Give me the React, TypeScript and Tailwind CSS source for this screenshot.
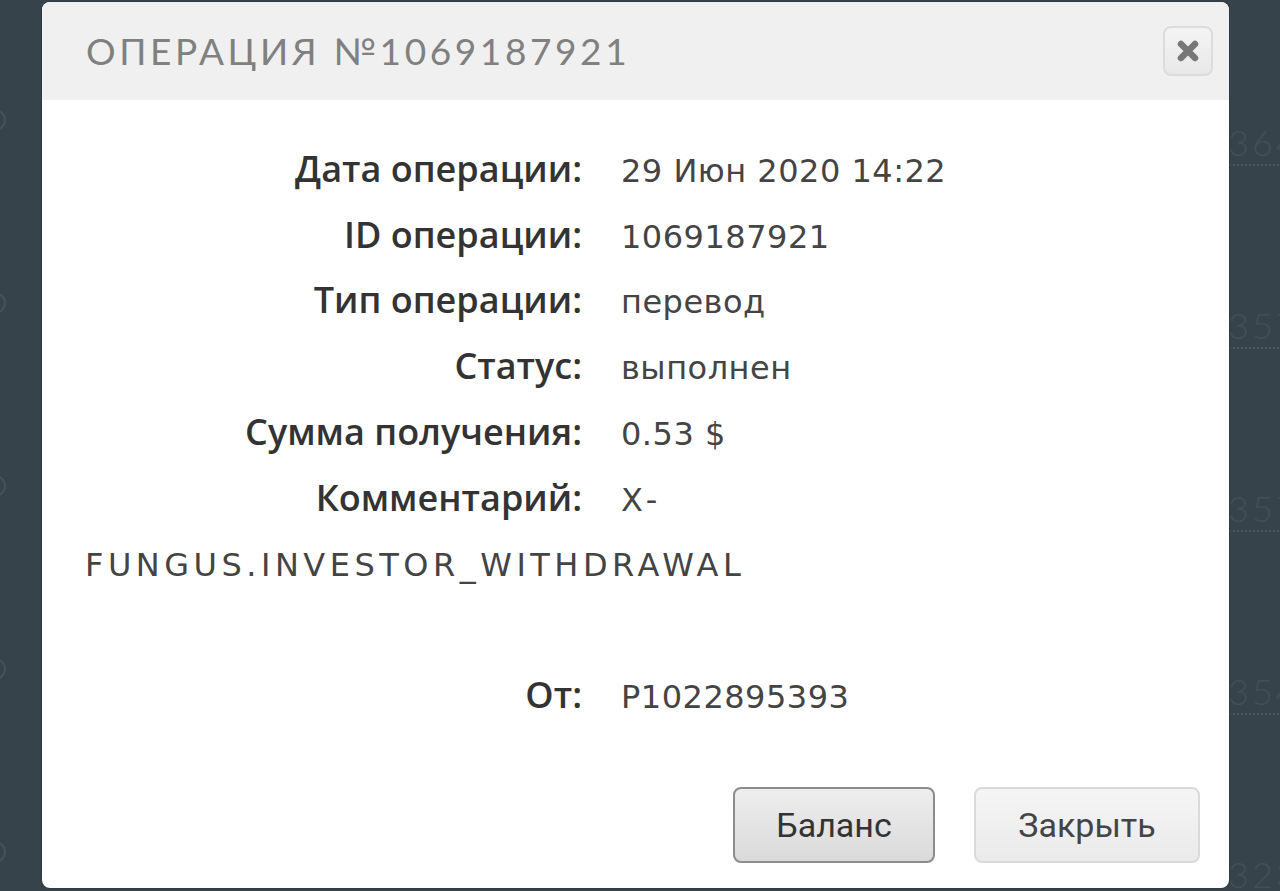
const bgRows = ['364', '357', '357', '354', '323']

const details = [
    { label: 'Дата операции:', value: '29 Июн 2020 14:22' },
    { label: 'ID операции:', value: '1069187921' },
    { label: 'Тип операции:', value: 'перевод' },
    { label: 'Статус:', value: 'выполнен' },
    { label: 'Сумма получения:', value: '0.53 $' },
    { label: 'Комментарий:', value: 'X-FUNGUS.INVESTOR_WITHDRAWAL', wide: true },
]

function Row({ label, value, wide }: { label: string; value: string; wide?: boolean }) {
    return (
        <div className="font-['DejaVu_Sans',sans-serif] text-[32px] leading-[65.7px] text-[#444]">
            <span className="inline-block w-[497px] mr-[39px] align-top text-right font-['Open_Sans',sans-serif] text-[36px] font-semibold leading-[60px] tracking-normal text-[#333]">
                {label}
            </span>
            <span className={wide ? 'tracking-[4.5px]' : 'tracking-[0.5px]'}>{value}</span>
        </div>
    )
}

export default function App() {
    return (
        <div className="relative h-[891px] w-[1280px] overflow-hidden bg-[#37434b] font-['Open_Sans',sans-serif]">
            {/* Page behind the modal */}
            <div className="flex flex-col pt-[28px]">
                {bgRows.map((n, i) => (
                    <div key={i} className="flex h-[183px] items-center justify-between">
                        <div className="-ml-[16px] h-[22px] w-[22px] rounded-full border-2 border-[#46525a]" />
                        <div className="mt-[50px] w-[52px] whitespace-nowrap">
                            <span className="inline-block border-b-2 border-dotted border-[#4c5860] pb-1 font-['Lato',sans-serif] text-[36px] font-light leading-none tracking-[3px] text-[#434f57]">
                                {n}.00
                            </span>
                        </div>
                    </div>
                ))}
            </div>

            {/* Modal */}
            <div className="absolute left-[42px] top-[2px] flex h-[886px] w-[1187px] flex-col overflow-hidden rounded-[8px] bg-white shadow-[0_0_2px_rgba(0,0,0,0.4)]">
                {/* Header */}
                <div className="flex h-[98px] shrink-0 items-center justify-between bg-[#f0f0f0] pl-[44px] pr-[16px]">
                    <h1 className="font-['Lato',sans-serif] text-[37px] font-normal tracking-[3.6px] text-[#808080]">
                        ОПЕРАЦИЯ №1069187921
                    </h1>
                    <button className="flex h-[50px] w-[50px] items-center justify-center rounded-[8px] border-2 border-[#dcdcdc] bg-gradient-to-b from-[#f4f4f4] to-[#e8e8e8]">
                        <svg width="26" height="26" viewBox="0 0 26 26">
                            <path
                                d="M6 6 L20 20 M20 6 L6 20"
                                stroke="#777"
                                strokeWidth="6.5"
                                strokeLinecap="round"
                            />
                        </svg>
                    </button>
                </div>

                {/* Details */}
                <div className="pl-[43px] pr-[40px] pt-[39px]">
                    {details.map((d) => (
                        <Row key={d.label} label={d.label} value={d.value} wide={d.wide} />
                    ))}
                    <div className="h-[65.7px]" />
                    <Row label="От:" value="P1022895393" />
                </div>

                {/* Buttons */}
                <div className="mt-auto flex justify-end gap-[39px] pb-[25px] pr-[29px] font-['Roboto',sans-serif] text-[34px] text-[#333]">
                    <button className="h-[76px] w-[202px] rounded-[8px] border-2 border-[#8c8c8c] bg-gradient-to-b from-[#eeeeee] to-[#dadada]">
                        Баланс
                    </button>
                    <button className="h-[76px] w-[226px] rounded-[8px] border-2 border-[#dadada] bg-gradient-to-b from-[#f5f5f5] to-[#eaeaea] text-[#444]">
                        Закрыть
                    </button>
                </div>
            </div>
        </div>
    )
}
